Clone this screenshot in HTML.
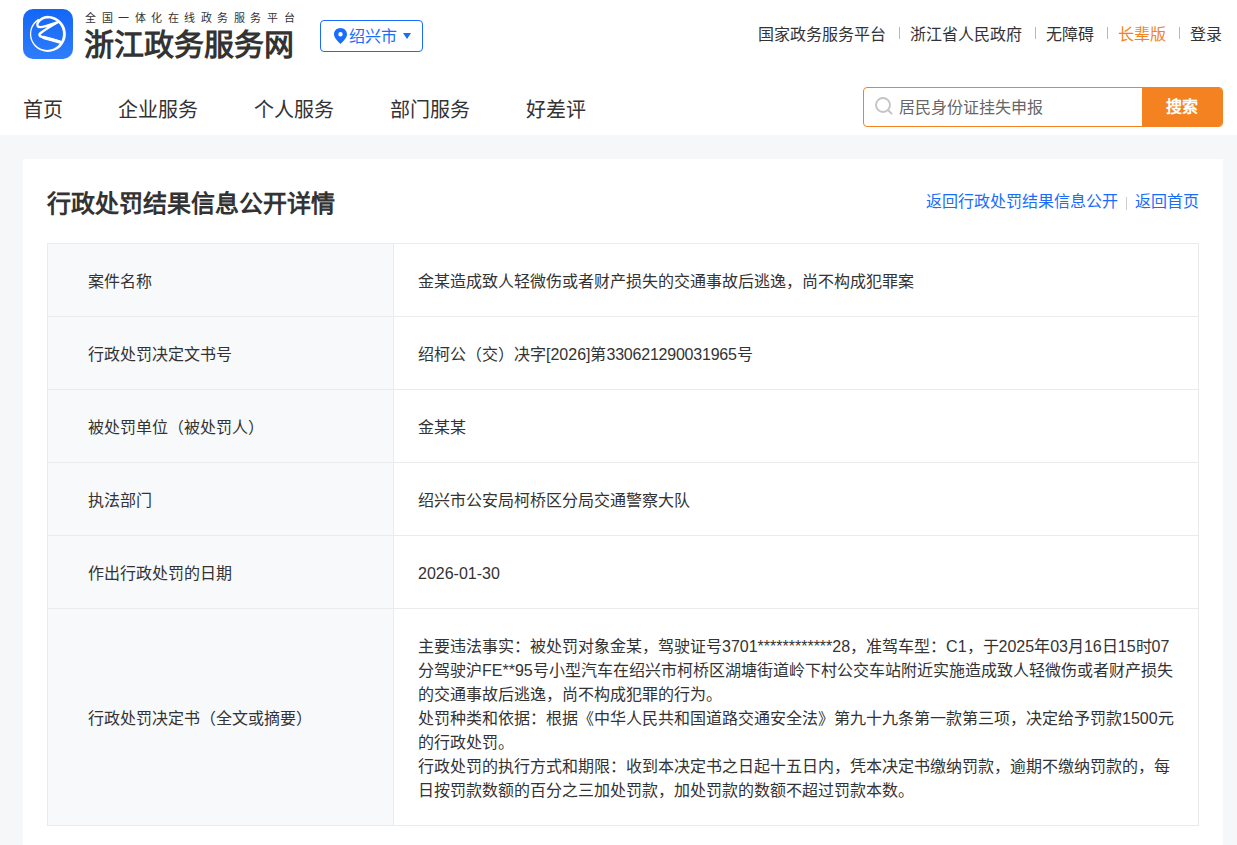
<!DOCTYPE html>
<html lang="zh-CN">
<head>
<meta charset="utf-8">
<title>行政处罚结果信息公开详情</title>
<style>
*{margin:0;padding:0;box-sizing:border-box}
html,body{width:1237px;height:845px;overflow:hidden;background:#fff}
body{font-family:"Liberation Sans",sans-serif;color:#333;position:relative}
.abs{position:absolute}
#logo{left:23px;top:9px;width:50px;height:50px}
#sub{left:85px;top:10px;font-size:11px;line-height:16px;letter-spacing:5.55px;color:#333;white-space:nowrap}
#brand{left:84px;top:27px;font-size:30px;line-height:36px;font-weight:bold;color:#333;white-space:nowrap;font-family:"Liberation Serif",serif}
#city{left:320px;top:20px;width:103px;height:32px;border:1px solid #1a6cff;border-radius:4px;color:#1a6cff;font-size:16px}
#city svg{position:absolute}
#city .t{position:absolute;left:28px;top:5px;line-height:22px;white-space:nowrap}
#toplinks span{position:absolute;top:24px;font-size:16px;line-height:22px;white-space:nowrap}
#toplinks i{position:absolute;top:27px;width:1px;height:12px;background:#b8b8b8}
#toplinks .o{color:#f48221}
#nav{left:22px;top:96px;font-size:20px;line-height:28px;white-space:nowrap}
#nav span{position:absolute;top:0}
#search{left:863px;top:87px;width:360px;height:40px;border:1px solid #f48221;border-radius:4px;overflow:hidden}
#search .ph{position:absolute;left:35px;top:9px;font-size:16px;line-height:22px;color:#666;white-space:nowrap}
#search .btn{position:absolute;right:0;top:0;width:80px;height:38px;background:#f48221;color:#fff;font-weight:bold;font-size:16px;line-height:38px;text-align:center}
#bg{left:0;top:135px;width:1237px;height:710px;background:#f6f7f9}
#card{left:23px;top:159px;width:1200px;height:700px;background:#fff}
#title{left:47px;top:188px;font-size:24px;line-height:32px;font-weight:bold;color:#333;white-space:nowrap}
#links{right:38px;top:191px;font-size:16px;line-height:22px;color:#1a6cff;white-space:nowrap;display:flex;align-items:center}
#links span.s{display:inline-block;width:1px;height:13px;background:#ccc;margin:0 8px;position:relative;top:1px}
table{position:absolute;left:47px;top:243px;width:1152px;border-collapse:collapse;font-size:16px;line-height:24px;color:#333}
td{border:1px solid #e9ebed;vertical-align:middle}
td.l{width:346px;background:#f8f9fb;padding:26px 0 22px 40px}
td.v{padding:26px 24px 22px 24px;white-space:nowrap}
</style>
</head>
<body>
<svg id="logo" class="abs" viewBox="0 0 50 50">
  <defs>
    <linearGradient id="lg" x1="0" y1="0" x2="0" y2="50" gradientUnits="userSpaceOnUse">
      <stop offset="0" stop-color="#1366f6"/>
      <stop offset="1" stop-color="#2f7dfd"/>
    </linearGradient>
  </defs>
  <rect x="0" y="0" width="50" height="50" rx="10" fill="url(#lg)"/>
  <path d="M6.9,24.9 A18,18 0 1 0 42.9,24.9 A18,18 0 1 0 6.9,24.9 Z M8.2,25.1 A15.9,15.9 0 1 0 40,25.1 A15.9,15.9 0 1 0 8.2,25.1 Z" fill="#fff" fill-rule="evenodd"/>
  <path d="M25,25 L15.3,9.6 L12.5,5 L23,2 L24,8 Z" fill="url(#lg)"/>
  <g fill="none" stroke="#fff" stroke-linecap="round" stroke-linejoin="round">
    <path d="M25,8 C20.5,8.3 16.8,10.6 14.9,13.6 C13.5,16 14.4,18.6 18,18.1 C24,17.3 30,14.8 35.6,12.8 C29,16.5 22,20.8 17.3,24.2 C15.6,25.6 16.3,27.4 19.5,28.1 C26,29.8 33,31.5 38.6,33.3" stroke-width="2.4"/>
    <path d="M21,28.6 C27,30.1 32,31.5 36.5,33" stroke-width="3.4"/>
  </g>
</svg>
<div id="sub" class="abs">全国一体化在线政务服务平台</div>
<div id="brand" class="abs">浙江政务服务网</div>
<div id="city" class="abs">
  <svg width="13" height="16" viewBox="0 0 13 16" style="left:13px;top:7px"><path d="M6.5,0 C10.1,0 13,2.8 13,6.3 C13,10 9,13.5 6.5,16 C4,13.5 0,10 0,6.3 C0,2.8 2.9,0 6.5,0 Z M6.5,4 A2.2,2.2 0 1 0 6.5,8.4 A2.2,2.2 0 1 0 6.5,4 Z" fill="#1a6cff" fill-rule="evenodd"/></svg>
  <span class="t">绍兴市</span>
  <svg width="8" height="6" viewBox="0 0 8 6" style="left:82px;top:12px"><path d="M0,0 L8,0 L4,6 Z" fill="#1a6cff"/></svg>
</div>
<div id="toplinks">
  <span style="left:758px">国家政务服务平台</span><i style="left:899px"></i><span style="left:910px">浙江省人民政府</span><i style="left:1035px"></i><span style="left:1046px">无障碍</span><i style="left:1107px"></i><span class="o" style="left:1118px">长辈版</span><i style="left:1179px"></i><span style="left:1190px">登录</span>
</div>
<div id="nav" class="abs">
  <span style="left:1px">首页</span>
  <span style="left:96px">企业服务</span>
  <span style="left:232px">个人服务</span>
  <span style="left:368px">部门服务</span>
  <span style="left:504px">好差评</span>
</div>
<div id="search" class="abs">
  <svg width="20" height="20" viewBox="0 0 20 20" style="position:absolute;left:11px;top:9px"><circle cx="8" cy="8" r="7" fill="none" stroke="#c4c4c4" stroke-width="1.9"/><path d="M13.2,13.2 L16.6,16.6" stroke="#c4c4c4" stroke-width="2" stroke-linecap="round"/></svg>
  <span class="ph">居民身份证挂失申报</span>
  <div class="btn">搜索</div>
</div>
<div id="bg" class="abs"></div>
<div id="card" class="abs"></div>
<div id="title" class="abs">行政处罚结果信息公开详情</div>
<div id="links" class="abs"><span>返回行政处罚结果信息公开</span><span class="s"></span><span>返回首页</span></div>
<table>
<tr><td class="l">案件名称</td><td class="v">金某造成致人轻微伤或者财产损失的交通事故后逃逸，尚不构成犯罪案</td></tr>
<tr><td class="l">行政处罚决定文书号</td><td class="v">绍柯公（交）决字[2026]第<span style="letter-spacing:-0.22px">330621290031965</span>号</td></tr>
<tr><td class="l">被处罚单位（被处罚人）</td><td class="v">金某某</td></tr>
<tr><td class="l">执法部门</td><td class="v">绍兴市公安局柯桥区分局交通警察大队</td></tr>
<tr><td class="l">作出行政处罚的日期</td><td class="v">2026-01-30</td></tr>
<tr><td class="l">行政处罚决定书（全文或摘要）</td><td class="v">主要违法事实：被处罚对象金某，驾驶证号3701************28，准驾车型：C1，于2025年03月16日15时07<br>分驾驶沪FE**95号小型汽车在绍兴市柯桥区湖塘街道岭下村公交车站附近实施造成致人轻微伤或者财产损失<br>的交通事故后逃逸，尚不构成犯罪的行为。<br>处罚种类和依据：根据《中华人民共和国道路交通安全法》第九十九条第一款第三项，决定给予罚款1500元<br>的行政处罚。<br>行政处罚的执行方式和期限：收到本决定书之日起十五日内，凭本决定书缴纳罚款，逾期不缴纳罚款的，每<br>日按罚款数额的百分之三加处罚款，加处罚款的数额不超过罚款本数。</td></tr>
</table>
</body>
</html>
